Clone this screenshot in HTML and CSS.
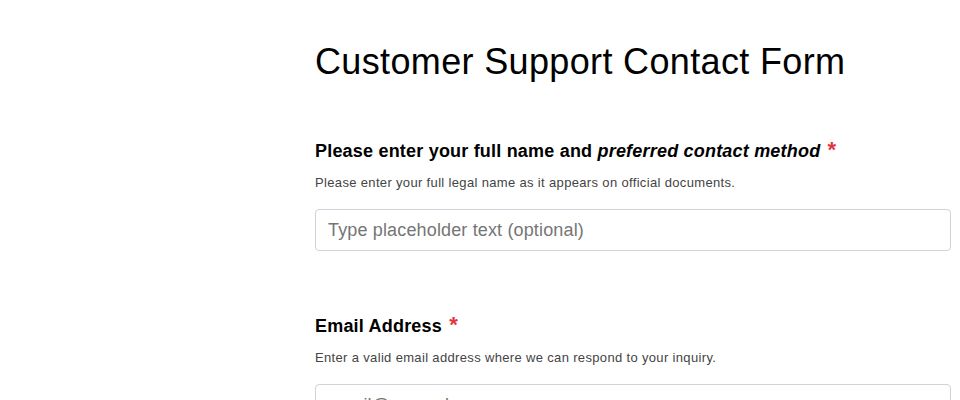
FILE: index.html
```html
<!DOCTYPE html>
<html lang="en">
<head>
<meta charset="utf-8">
<title>Customer Support Contact Form</title>
<link rel="stylesheet" href="styles.css">
</head>
<body>
<main class="page">
  <h1 class="title">Customer Support Contact Form</h1>
  <form class="form">
    <div class="field">
      <label class="label" for="name">Please enter your full name and <em>preferred contact method</em> <span class="req">*</span></label>
      <p class="help">Please enter your full legal name as it appears on official documents.</p>
      <input class="input" id="name" type="text" placeholder="Type placeholder text (optional)">
    </div>
    <div class="field">
      <label class="label" for="email">Email Address <span class="req">*</span></label>
      <p class="help">Enter a valid email address where we can respond to your inquiry.</p>
      <input class="input" id="email" type="email" placeholder="email@example.com">
    </div>
  </form>
</main>
</body>
</html>
```

FILE: styles.css
```css
html, body {
  margin: 0;
  padding: 0;
  background: #ffffff;
}
body {
  font-family: "Liberation Sans", Arial, sans-serif;
  color: #000;
}
.page {
  margin-left: 315px;
  margin-right: 9px;
  padding-top: 37px;
}
.title {
  margin: 0;
  font-size: 36px;
  font-weight: 400;
  line-height: 50px;
  letter-spacing: 0.35px;
}
.form {
  display: flex;
  flex-direction: column;
  gap: 63px;
  margin-top: 52px;
}
.field {
  display: flex;
  flex-direction: column;
}
.label {
  font-size: 18px;
  font-weight: 700;
  line-height: 24px;
  letter-spacing: 0.2px;
}
.label em {
  font-style: italic;
}
.req {
  color: #e3343f;
  font-size: 22px;
  line-height: 0;
  margin-left: 2px;
}
.help {
  margin: 12px 0 0;
  font-size: 13px;
  line-height: 16px;
  letter-spacing: 0.34px;
  color: #444;
}
.input {
  margin-top: 18px;
  height: 42px;
  box-sizing: border-box;
  border: 1px solid #cfd3d9;
  border-radius: 4px;
  padding: 0 12px;
  font-family: "Liberation Sans", Arial, sans-serif;
  font-size: 18px;
  letter-spacing: 0.15px;
  color: #222;
  background: #fff;
}
.input::placeholder {
  color: #757575;
}
```
